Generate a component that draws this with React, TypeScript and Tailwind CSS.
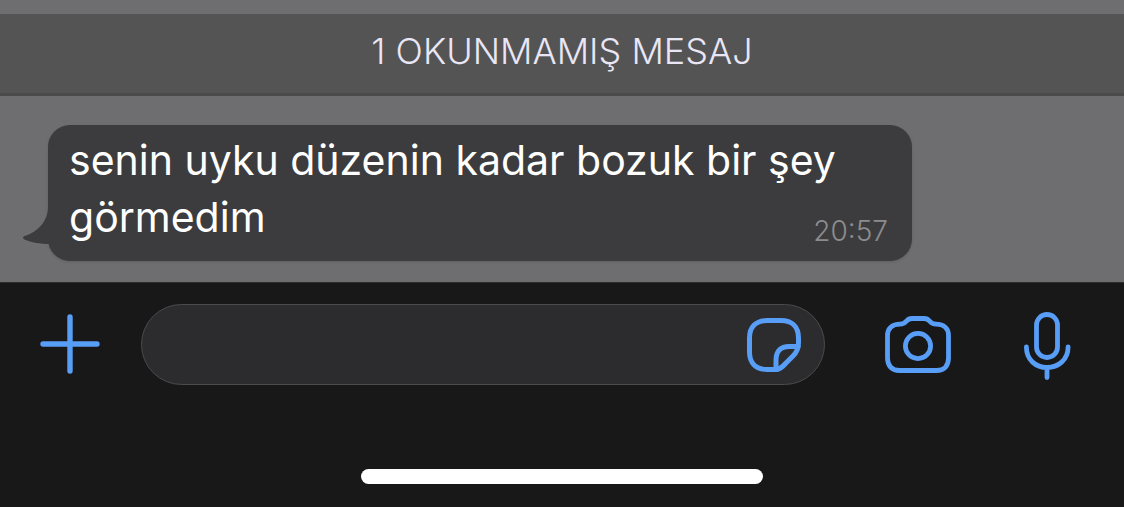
const message = {
    text: 'senin uyku düzenin kadar bozuk bir şey görmedim',
    time: '20:57',
};

const PlusIcon = () => (
    <svg width="60" height="62" viewBox="0 0 60 62" fill="none" stroke="currentColor" strokeWidth="5.4" strokeLinecap="round" aria-hidden="true">
        <path d="M30 3v54M3 30h54"/>
    </svg>
);

const StickerIcon = () => (
    <svg width="54" height="54" viewBox="0 0 54 54" fill="none" stroke="currentColor" strokeWidth="5" strokeLinecap="round" strokeLinejoin="round" aria-hidden="true">
        <path d="M29 51.500H20C9 51.500 2.500 45 2.500 34V20C2.500 9 9 2.500 20 2.500H34C45 2.500 51.500 9 51.500 20V25C51.500 31 49.500 34.500 46 38L38.500 45.500C35.500 49 33 51.500 29 51.500Z"/>
        <path d="M29 51V42C29 33 34 28.500 42 28.500H51"/>
    </svg>
);

const CameraIcon = () => (
    <svg width="66" height="58" viewBox="0 0 66 58" fill="none" stroke="currentColor" strokeWidth="4.800" strokeLinejoin="round" aria-hidden="true">
        <path d="M27 2.500H39C41.500 2.500 43 3.200 44.500 5C46.500 7.500 47.500 8.200 51 8.200C59 8.200 63.500 12.500 63.500 19.500V42C63.500 50 59 54.500 51.500 54.500H14.500C7 54.500 2.500 50 2.500 42V19.500C2.500 12.500 7 8.200 15 8.200C18.500 8.200 19.500 7.500 21.500 5C23 3.200 24.500 2.500 27 2.500Z"/>
        <circle cx="33" cy="30" r="12.600"/>
    </svg>
);

const MicIcon = () => (
    <svg width="47" height="70" viewBox="0 -2 47 70" fill="none" stroke="currentColor" strokeWidth="4.800" strokeLinecap="round" aria-hidden="true">
        <rect x="12.500" y="2.500" width="21" height="43" rx="10.500"/>
        <path d="M2.400 35C2.400 48 12 55.500 23 55.500S44.100 48 44.100 35M23 55.500V65.600"/>
    </svg>
);

const BubbleTail = () => (
    <svg className="absolute -left-[25px] bottom-4 text-[#3c3c3e]" width="30" height="38" viewBox="0 0 30 38" fill="currentColor" aria-hidden="true">
        <path d="M25 0C25 14 15 25 1.500 29C-0.500 30 -0.300 31.500 1.500 32.500C8 35.500 18 37 26 37L30 38V0Z"/>
    </svg>
);

export default function App() {
    return (
        <main className="min-h-screen flex flex-col bg-[#6e6e70] font-['Inter',sans-serif]">
            <section className="flex-1 pt-3.5">
                <h1 className="border-b-3 border-[#4a4a4b] bg-[#545455] pt-2.5 pb-3.5 text-center text-[36px] leading-[55px] font-light text-[#e9e6f5]">
                    1 OKUNMAMIŞ MESAJ
                </h1>
                <div className="px-12 pt-[29px] pb-[21px]">
                    <article className="relative w-fit max-w-[864px] rounded-[22px] bg-[#3c3c3e] pt-[7px] pr-6 pb-[15px] pl-[21px] shadow">
                        <BubbleTail/>
                        <p className="text-[41px] leading-[57px] text-white">
                            {message.text}
                            <time className="float-right mt-6 text-[28px] leading-9 font-light text-[#8c8c8e]">
                                {message.time}
                            </time>
                        </p>
                    </article>
                </div>
            </section>
            <footer className="border-t border-[#2c2c2d] bg-[#181818] pt-[21px] pb-[23px]">
                <form className="flex items-center pl-10 pr-[53px] text-[#589df6]" onSubmit={e => e.preventDefault()}>
                    <button type="button" aria-label="Ekle" className="mr-[41px] shrink-0 cursor-pointer">
                        <PlusIcon/>
                    </button>
                    <div className="mr-[60px] flex h-[81px] min-w-0 flex-1 items-center rounded-full border border-[#4b4b4c] bg-[#2c2c2e] pl-8 pr-[23px]">
                        <input type="text" aria-label="Mesaj" className="h-full min-w-0 flex-1 bg-transparent text-[41px] text-white outline-none"/>
                        <button type="button" aria-label="Çıkartma" className="shrink-0 cursor-pointer">
                            <StickerIcon/>
                        </button>
                    </div>
                    <button type="button" aria-label="Kamera" className="mr-[73px] shrink-0 cursor-pointer">
                        <CameraIcon/>
                    </button>
                    <button type="button" aria-label="Sesli mesaj" className="shrink-0 cursor-pointer">
                        <MicIcon/>
                    </button>
                </form>
                <div className="mx-auto mt-[84px] h-[15px] w-[402px] rounded-full bg-white"/>
            </footer>
        </main>
    );
}
